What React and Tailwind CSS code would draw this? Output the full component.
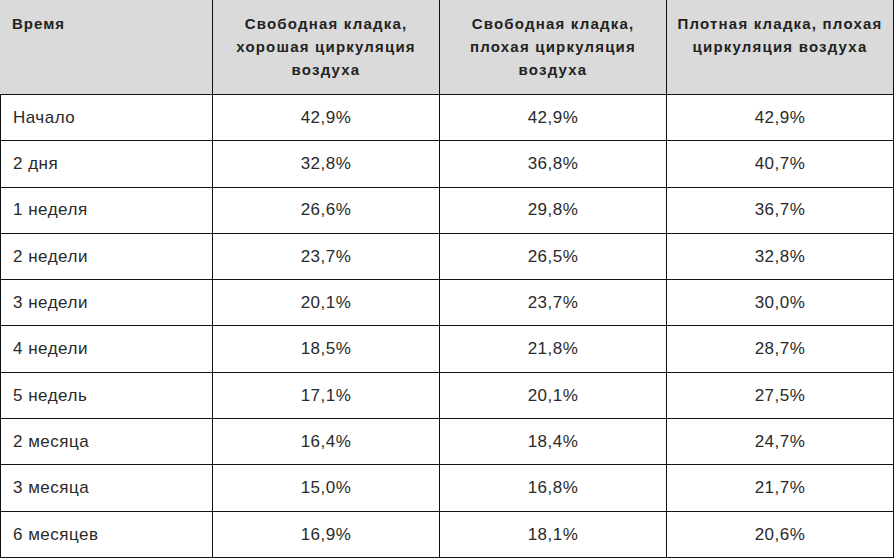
import React from 'react';

const rows = [
  ['Начало', '42,9%', '42,9%', '42,9%'],
  ['2 дня', '32,8%', '36,8%', '40,7%'],
  ['1 неделя', '26,6%', '29,8%', '36,7%'],
  ['2 недели', '23,7%', '26,5%', '32,8%'],
  ['3 недели', '20,1%', '23,7%', '30,0%'],
  ['4 недели', '18,5%', '21,8%', '28,7%'],
  ['5 недель', '17,1%', '20,1%', '27,5%'],
  ['2 месяца', '16,4%', '18,4%', '24,7%'],
  ['3 месяца', '15,0%', '16,8%', '21,7%'],
  ['6 месяцев', '16,9%', '18,1%', '20,6%'],
];

const headers = [
  'Свободная кладка, хорошая циркуляция воздуха',
  'Свободная кладка, плохая циркуляция воздуха',
  'Плотная кладка, плохая циркуляция воздуха',
];

export default function App() {
  return (
    <div className="w-[894px] h-[558px] bg-white text-[#1e1e1e] font-['Liberation_Sans',Arial,sans-serif] overflow-hidden">
      {/* header */}
      <div className="flex h-[95px] bg-[#dadada] border-b border-[#111]">
        <div className="w-[213px] shrink-0 border-r border-[#111] px-3 pt-[12px] text-[15px] leading-[23px] tracking-[1px] font-bold text-[#222]">
          Время
        </div>
        {headers.map((h, i) => (
          <div
            key={i}
            className="w-[227px] shrink-0 border-r border-[#111] px-2 pt-[12px] text-[15px] leading-[23px] tracking-[1.2px] font-bold text-center text-[#222]"
          >
            {h}
          </div>
        ))}
      </div>

      {/* body */}
      {rows.map((r, i) => (
        <div key={i} className="flex h-[46.3px] border-b border-[#111] text-[17px] tracking-[0.5px] text-[#2a2a2a]">
          <div className="w-[213px] shrink-0 border-l border-r border-[#111] pl-3 flex items-center">
            {r[0]}
          </div>
          {r.slice(1).map((v, j) => (
            <div
              key={j}
              className="w-[227px] shrink-0 border-r border-[#111] flex items-center justify-center"
            >
              {v}
            </div>
          ))}
        </div>
      ))}
    </div>
  );
}
